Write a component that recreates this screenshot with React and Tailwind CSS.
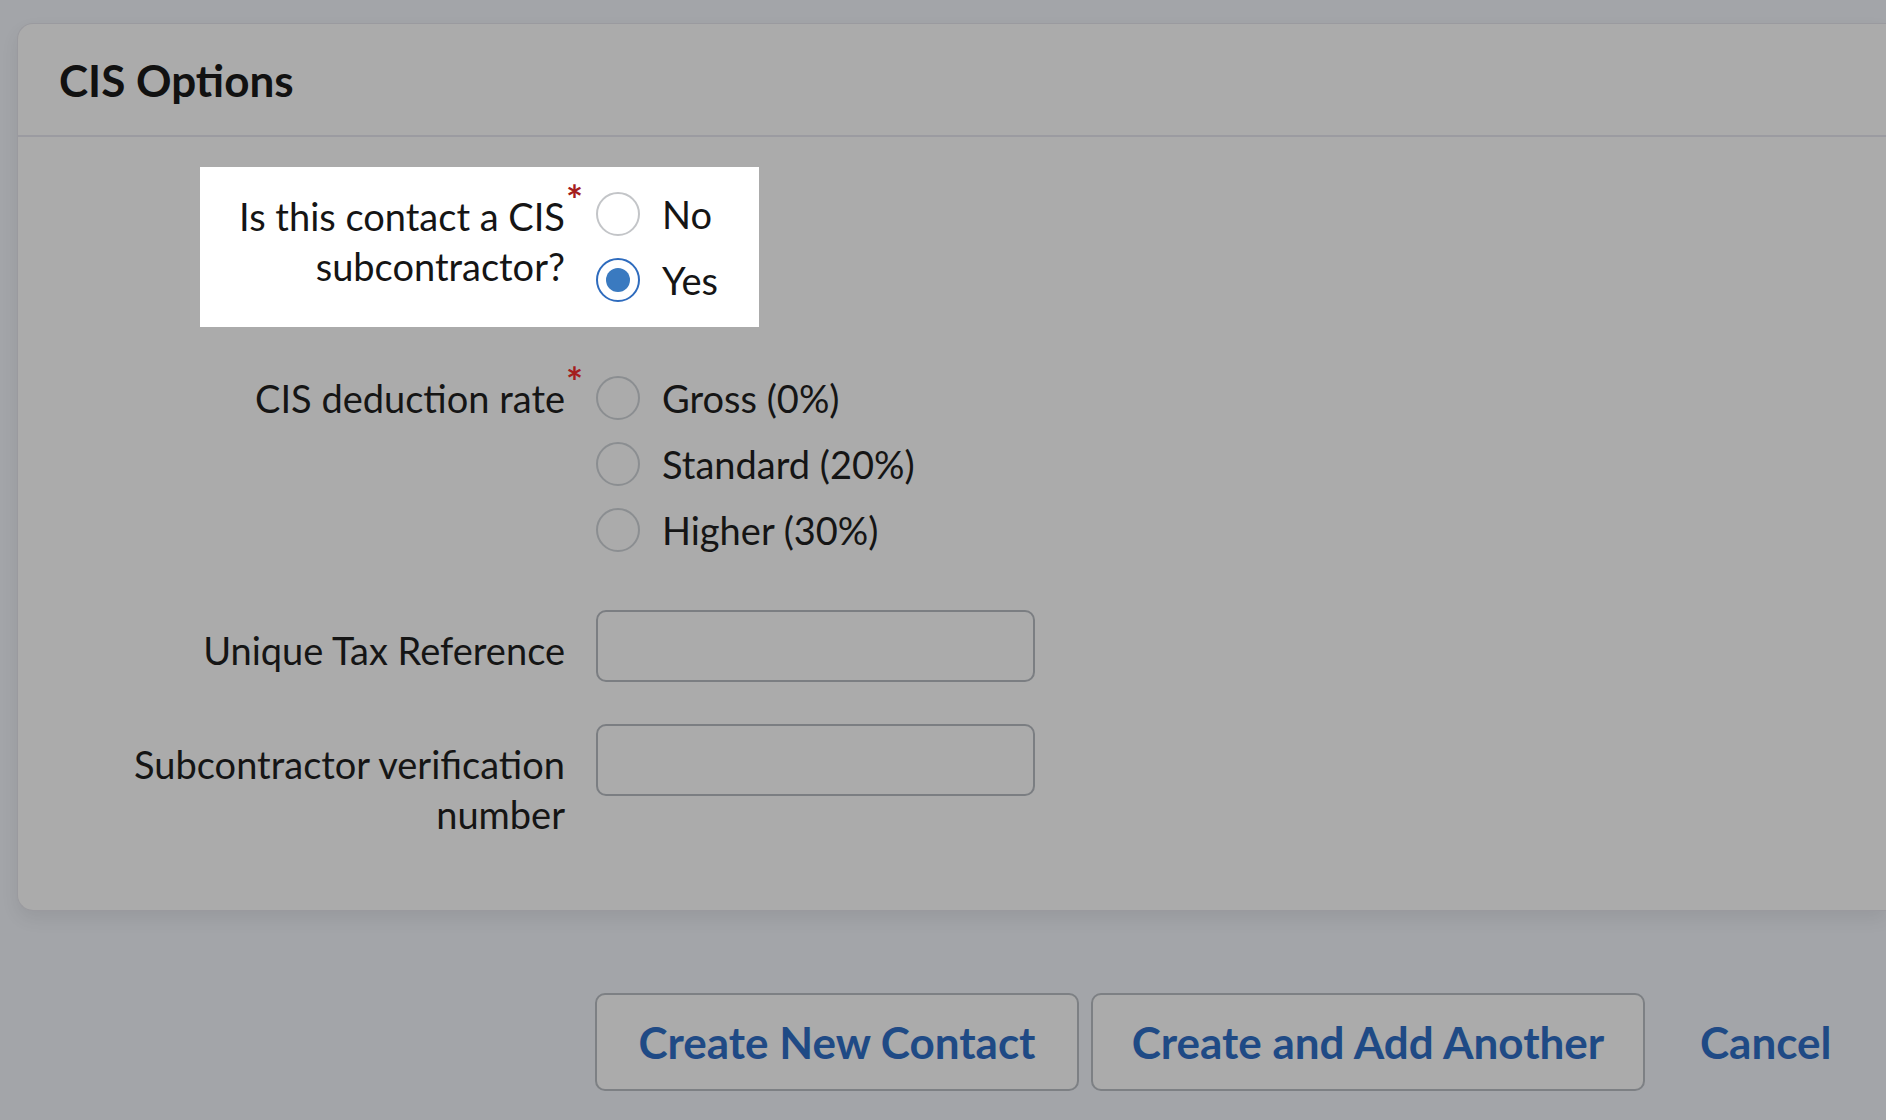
import { useState } from 'react'

const font = { fontFamily: 'Lato, "Open Sans", sans-serif' }

function Radio({ checked, onHighlight, label, onClick }) {
  return (
    <button type="button" onClick={onClick} className="flex h-[66px] items-center gap-[22px] text-left">
      {checked ? (
        <span className="flex h-[44px] w-[44px] items-center justify-center rounded-full border-2 border-[#2e6bbd] bg-white">
          <span className="h-[24px] w-[24px] rounded-full bg-[#3a7ac0]" />
        </span>
      ) : (
        <span
          className={`h-[44px] w-[44px] rounded-full border-2 ${
            onHighlight ? 'border-[#c3c5c8] bg-white' : 'border-[#8b8e91]'
          }`}
        />
      )}
      <span className="text-[38px] leading-[50px] text-[#151515]">{label}</span>
    </button>
  )
}

function Label({ children, required, className = '' }) {
  return (
    <div className={`relative text-right text-[38px] leading-[50px] text-[#151515] ${className}`}>
      {children}
      {required && (
        <span className="absolute -right-[18px] -top-[11px] text-[40px] font-bold leading-none text-[#a51d1d]">*</span>
      )}
    </div>
  )
}

export default function App() {
  const [isSub, setIsSub] = useState('yes')
  const [rate, setRate] = useState(null)

  return (
    <div className="min-h-screen w-full overflow-hidden bg-[#a3a5a9]" style={font}>
      <div className="pl-[17px] pt-[23px]">
        {/* CIS card */}
        <div className="rounded-l-[16px] border border-r-0 border-[#9a9a9f] bg-[#ababab] shadow-[0_8px_18px_rgba(0,0,0,0.07)]">
          <div className="flex h-[113px] items-center border-b-2 border-[#9b9ba1] px-[41px]">
            <h2 className="text-[44px] font-bold text-[#111]">CIS Options</h2>
          </div>

          <div className="pb-[71px] pt-[30px]">
            {/* highlighted question */}
            <div className="ml-[182px] flex w-[559px] gap-[31px] bg-white py-[14px]">
              <Label required className="mt-[10px] w-[365px]">
                Is this contact a CIS
                <br />
                subcontractor?
              </Label>
              <div className="flex flex-col">
                <Radio onHighlight label="No" checked={isSub === 'no'} onClick={() => setIsSub('no')} />
                <Radio onHighlight label="Yes" checked={isSub === 'yes'} onClick={() => setIsSub('yes')} />
              </div>
            </div>

            <div className="mt-[38px] flex gap-[31px]">
              <Label required className="mt-[8px] w-[547px]">
                CIS deduction rate
              </Label>
              <div className="flex flex-col">
                <Radio label="Gross (0%)" checked={rate === 'gross'} onClick={() => setRate('gross')} />
                <Radio label="Standard (20%)" checked={rate === 'standard'} onClick={() => setRate('standard')} />
                <Radio label="Higher (30%)" checked={rate === 'higher'} onClick={() => setRate('higher')} />
              </div>
            </div>

            <div className="mt-[47px] flex items-start gap-[31px]">
              <Label className="mt-[15px] w-[547px]">Unique Tax Reference</Label>
              <input className="h-[72px] w-[439px] rounded-[10px] border-2 border-[#7b7e82] bg-transparent px-4 text-[30px] outline-none" />
            </div>

            <div className="mt-[42px] flex items-start gap-[31px]">
              <Label className="mt-[15px] w-[547px]">
                Subcontractor verification
                <br />
                number
              </Label>
              <input className="h-[72px] w-[439px] rounded-[10px] border-2 border-[#7b7e82] bg-transparent px-4 text-[30px] outline-none" />
            </div>
          </div>
        </div>
      </div>

      {/* actions */}
      <div className="ml-[595px] mt-[82px] flex items-center">
        <button className="flex h-[98px] w-[484px] items-center justify-center rounded-[10px] border-2 border-[#7d8084] bg-[#ababab] text-[44px] font-bold text-[#1f4a85]">
          Create New Contact
        </button>
        <button className="ml-[12px] flex h-[98px] w-[554px] items-center justify-center rounded-[10px] border-2 border-[#7d8084] bg-[#ababab] text-[44px] font-bold text-[#1f4a85]">
          Create and Add Another
        </button>
        <button className="ml-[55px] text-[44px] font-bold text-[#1f4a85]">Cancel</button>
      </div>
    </div>
  )
}
